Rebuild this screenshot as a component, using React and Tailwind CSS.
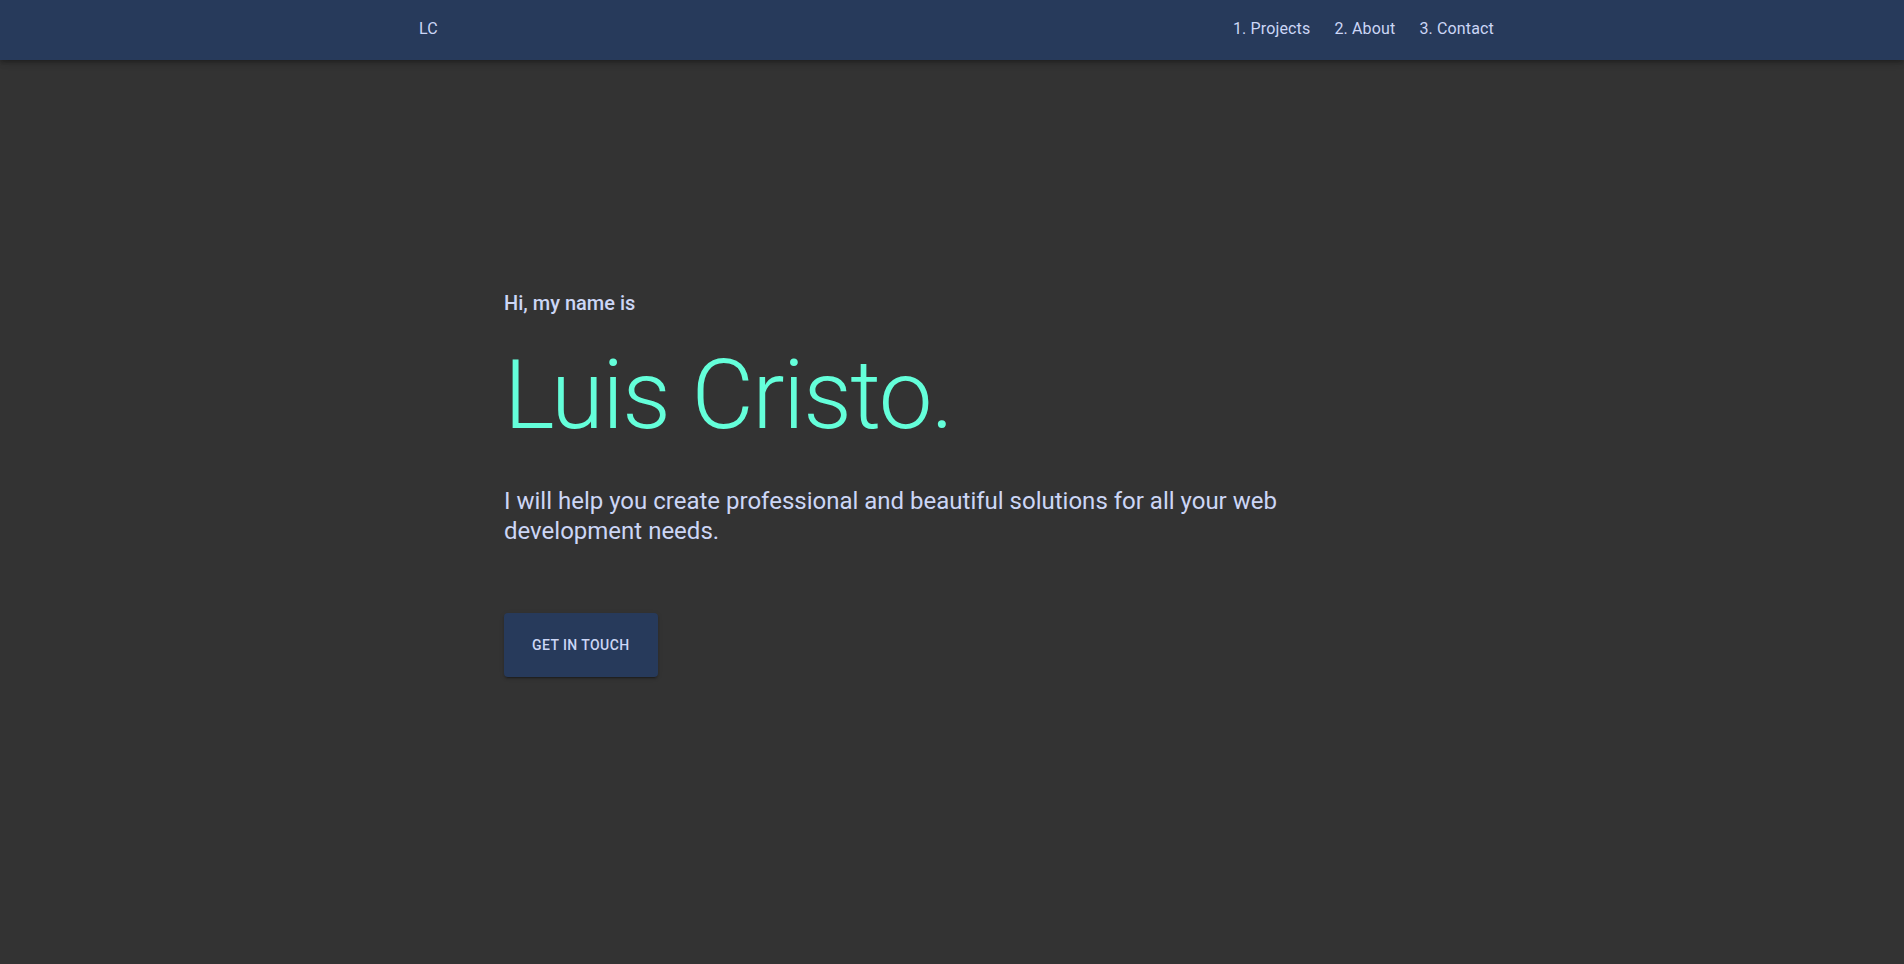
import React from 'react'

const links = ['1. Projects', '2. About', '3. Contact']

const App = () => {
  return (
    <div className="min-h-screen bg-[#333333] font-['Roboto','Liberation_Sans',sans-serif] text-[#ccd6f6]">
      {/* Navbar */}
      <header className="h-[60px] bg-[#273a5b] shadow-[0_2px_4px_-1px_rgba(0,0,0,0.2),0_4px_5px_0_rgba(0,0,0,0.14),0_1px_10px_0_rgba(0,0,0,0.12)]">
        <nav className="flex h-full items-center justify-between pb-[2px] pl-[419px] pr-[410px] text-base tracking-[0.00938em]">
          <a href="#" className="text-[#ccd6f6]">LC</a>
          <ul className="flex items-center gap-6">
            {links.map((l) => (
              <li key={l}>
                <a href="#" className="text-[#ccd6f6]">{l}</a>
              </li>
            ))}
          </ul>
        </nav>
      </header>

      {/* Hero */}
      <main className="mx-auto max-w-4xl pt-[227px]">
        <p className="text-xl font-medium leading-8">Hi, my name is</p>
        <h1 className="mt-5 text-[96px] font-light leading-[112px] tracking-[-0.01562em] text-[#64ffda]">Luis Cristo.</h1>
        <p className="mt-[35px] text-2xl leading-[30px]">
          I will help you create professional and beautiful solutions for all your web development needs.
        </p>
        <button className="mt-[67px] flex h-16 items-center rounded px-7 text-sm font-medium uppercase tracking-[0.03em] bg-[#273a5b] text-[#ccd6f6] shadow-[0_3px_1px_-2px_rgba(0,0,0,0.2),0_2px_2px_0_rgba(0,0,0,0.14),0_1px_5px_0_rgba(0,0,0,0.12)]">
          Get in touch
        </button>
      </main>
    </div>
  )
}

export default App
